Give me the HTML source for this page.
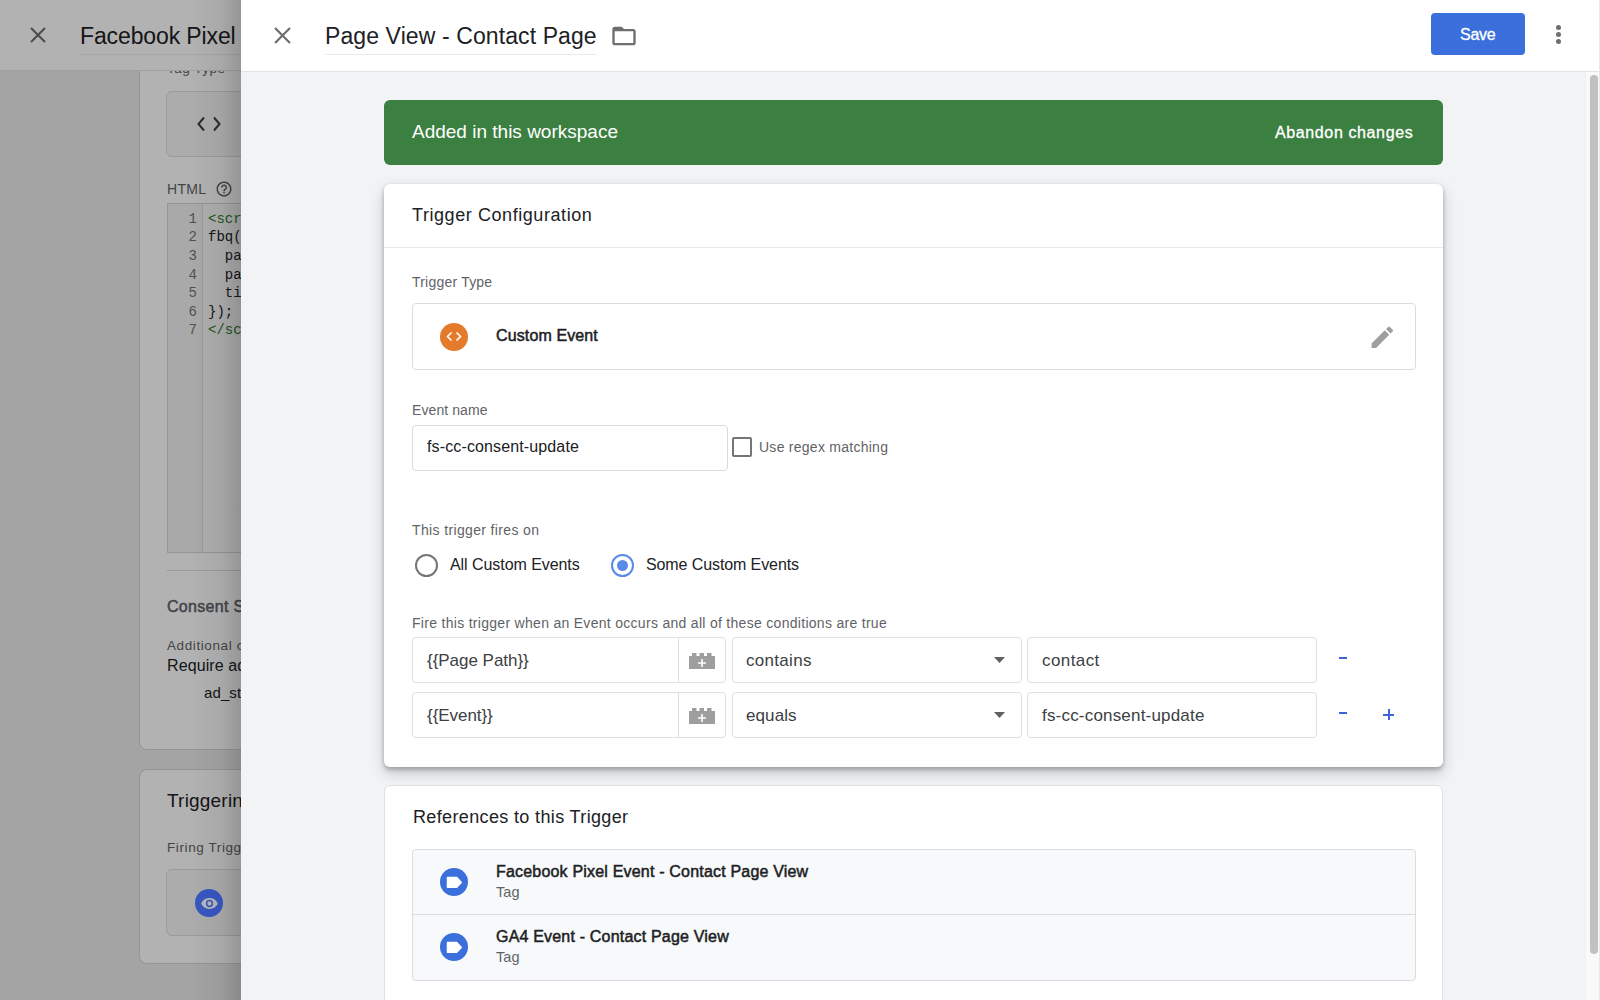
<!DOCTYPE html>
<html><head><meta charset="utf-8"><style>
*{box-sizing:border-box;margin:0;padding:0}
html,body{width:1600px;height:1000px;overflow:hidden;background:#f1f3f4;font-family:"Liberation Sans",sans-serif;color:#202124}
.a{position:absolute}
.t{position:absolute;white-space:nowrap;line-height:1}
svg{position:absolute;overflow:visible}
</style></head><body>
<div class="a" style="left:0;top:0;width:241px;height:1000px;overflow:hidden;background:#ebebeb">
<div class="a" style="left:139px;top:20px;width:220px;height:730px;background:#fff;border-radius:8px;border:1px solid #d6d6d6"></div>
<div class="t" style="left:167px;top:61.5px;font-size:13.5px;color:#5f6368;letter-spacing:0.5px;font-weight:normal;">Tag Type</div>
<div class="a" style="left:166px;top:91px;width:120px;height:66px;border:1px solid #dedede;border-radius:6px;background:#f7f7f7"></div>
<svg style="left:197px;top:116px" width="24" height="16" viewBox="0 0 24 16"><path d="M7 1.5L1.5 8L7 14.5M17 1.5L22.5 8L17 14.5" fill="none" stroke="#3c4043" stroke-width="2"/></svg>
<div class="t" style="left:167px;top:182px;font-size:14px;color:#5f6368;letter-spacing:0.3px;font-weight:normal;">HTML</div>
<svg style="left:214.8px;top:180.1px" width="18.1" height="18.1" viewBox="0 0 24 24"><path d="M11 18h2v-2h-2v2zm1-16C6.48 2 2 6.48 2 12s4.48 10 10 10 10-4.48 10-10S17.52 2 12 2zm0 18c-4.41 0-8-3.59-8-8s3.59-8 8-8 8 3.59 8 8-3.59 8-8 8zm0-14c-2.21 0-4 1.79-4 4h2c0-1.1.9-2 2-2s2 .9 2 2c0 2-3 1.75-3 5h2c0-2.250 3-2.5 3-5 0-2.21-1.79-4-4-4z" fill="#5f6368"/></svg>
<div class="a" style="left:167px;top:203px;width:120px;height:350px;border:1px solid #d6d6d6;background:#fafafa"></div>
<div class="a" style="left:168px;top:204px;width:35px;height:348px;border-right:1px solid #e0e0e0;background:#f3f3f3"></div>
<div class="t" style="left:188.5px;top:211.8px;font-size:14px;color:#757575;letter-spacing:0px;font-weight:normal;font-family:'Liberation Mono',monospace">1</div>
<div class="t" style="left:208px;top:211.8px;font-size:14px;color:#2e7d32;letter-spacing:0px;font-weight:normal;font-family:'Liberation Mono',monospace">&lt;scr</div>
<div class="t" style="left:188.5px;top:230.4px;font-size:14px;color:#757575;letter-spacing:0px;font-weight:normal;font-family:'Liberation Mono',monospace">2</div>
<div class="t" style="left:208px;top:230.4px;font-size:14px;color:#202124;letter-spacing:0px;font-weight:normal;font-family:'Liberation Mono',monospace">fbq(</div>
<div class="t" style="left:188.5px;top:249.0px;font-size:14px;color:#757575;letter-spacing:0px;font-weight:normal;font-family:'Liberation Mono',monospace">3</div>
<div class="t" style="left:208px;top:249.0px;font-size:14px;color:#202124;letter-spacing:0px;font-weight:normal;font-family:'Liberation Mono',monospace">&nbsp;&nbsp;pa</div>
<div class="t" style="left:188.5px;top:267.6px;font-size:14px;color:#757575;letter-spacing:0px;font-weight:normal;font-family:'Liberation Mono',monospace">4</div>
<div class="t" style="left:208px;top:267.6px;font-size:14px;color:#202124;letter-spacing:0px;font-weight:normal;font-family:'Liberation Mono',monospace">&nbsp;&nbsp;pa</div>
<div class="t" style="left:188.5px;top:286.20000000000005px;font-size:14px;color:#757575;letter-spacing:0px;font-weight:normal;font-family:'Liberation Mono',monospace">5</div>
<div class="t" style="left:208px;top:286.20000000000005px;font-size:14px;color:#202124;letter-spacing:0px;font-weight:normal;font-family:'Liberation Mono',monospace">&nbsp;&nbsp;ti</div>
<div class="t" style="left:188.5px;top:304.8px;font-size:14px;color:#757575;letter-spacing:0px;font-weight:normal;font-family:'Liberation Mono',monospace">6</div>
<div class="t" style="left:208px;top:304.8px;font-size:14px;color:#202124;letter-spacing:0px;font-weight:normal;font-family:'Liberation Mono',monospace">});</div>
<div class="t" style="left:188.5px;top:323.40000000000003px;font-size:14px;color:#757575;letter-spacing:0px;font-weight:normal;font-family:'Liberation Mono',monospace">7</div>
<div class="t" style="left:208px;top:323.40000000000003px;font-size:14px;color:#2e7d32;letter-spacing:0px;font-weight:normal;font-family:'Liberation Mono',monospace">&lt;/sc</div>
<div class="a" style="left:167px;top:570px;width:120px;height:1px;background:#dadce0"></div>
<div class="t" style="left:167px;top:599px;font-size:16px;color:#5f6368;letter-spacing:0.3px;font-weight:normal;-webkit-text-stroke:0.5px #5f6368">Consent Settings</div>
<div class="t" style="left:167px;top:638.5px;font-size:13.5px;color:#5f6368;letter-spacing:0.6px;font-weight:normal;">Additional consent</div>
<div class="t" style="left:167px;top:658px;font-size:16px;color:#202124;letter-spacing:0.1px;font-weight:normal;">Require additional</div>
<div class="t" style="left:204px;top:685px;font-size:15px;color:#202124;letter-spacing:0.1px;font-weight:normal;">ad_storage</div>
<div class="a" style="left:139px;top:769px;width:220px;height:195px;background:#fff;border-radius:8px;border:1px solid #d6d6d6"></div>
<div class="t" style="left:167px;top:791px;font-size:19px;color:#202124;letter-spacing:0.2px;font-weight:normal;">Triggering</div>
<div class="t" style="left:167px;top:840.5px;font-size:13.5px;color:#5f6368;letter-spacing:0.6px;font-weight:normal;">Firing Triggers</div>
<div class="a" style="left:166px;top:869px;width:120px;height:67px;border:1px solid #dedede;border-radius:6px;background:#f7f7f7"></div>
<div class="a" style="left:0px;top:0px;width:241px;height:71px;background:#fff;border-bottom:1px solid #e6e6e6"></div>
<svg style="left:30px;top:27px" width="16" height="16" viewBox="0 0 16 16"><path d="M1 1L15 15M15 1L1 15" stroke="#6e6e6e" stroke-width="2.1"/></svg>
<div class="t" style="left:80px;top:25px;font-size:23px;color:#202124;letter-spacing:-0.12px;font-weight:normal;">Facebook Pixel</div>
<div class="a" style="left:80px;top:54px;width:161px;height:1px;background:#ececec"></div>
<div class="a" style="left:0px;top:0px;width:241px;height:1000px;background:rgba(0,0,0,.30)"></div>
<div class="a" style="left:195px;top:889px;width:28px;height:28px;border-radius:50%;background:#3757c2"></div>
<svg style="left:199.5px;top:893.5px" width="19" height="19" viewBox="0 0 24 24"><path d="M12 5.2C7.2 5.2 3.2 8 1.6 12c1.6 4 5.6 6.8 10.4 6.8s8.8-2.8 10.4-6.8C20.8 8 16.8 5.2 12 5.2zm0 11.4a4.6 4.6 0 110-9.2 4.6 4.6 0 010 9.2zm0-7.3a2.7 2.7 0 100 5.4 2.7 2.7 0 000-5.4z" fill="#b9b9b9"/></svg>
<div class="a" style="left:190px;top:0px;width:51px;height:1000px;background:linear-gradient(to right,rgba(0,0,0,0),rgba(0,0,0,.05) 60%,rgba(0,0,0,.16))"></div>
</div>
<div class="a" style="left:241px;top:0px;width:1359px;height:1000px;background:#f1f3f4"></div>
<div class="a" style="left:241px;top:0px;width:1359px;height:72px;background:#fff;border-bottom:1px solid #e3e3e3"></div>
<svg style="left:274px;top:27px" width="17" height="17" viewBox="0 0 16 16"><path d="M1 1L15 15M15 1L1 15" stroke="#6e6e6e" stroke-width="2.1"/></svg>
<div class="t" style="left:325px;top:25px;font-size:23px;color:#202124;letter-spacing:0.1px;font-weight:normal;">Page View - Contact Page</div>
<div class="a" style="left:325px;top:54px;width:271px;height:1px;background:#e8eaed"></div>
<svg style="left:609.5px;top:21.8px" width="28" height="28" viewBox="0 0 24 24"><path d="M20 6h-8l-2-2H4c-1.1 0-1.99.9-1.99 2L2 18c0 1.1.9 2 2 2h16c1.1 0 2-.9 2-2V8c0-1.1-.9-2-2-2zm0 12H4V8h16v10z" fill="#6e6e6e"/></svg>
<div class="a" style="left:1431px;top:13px;width:94px;height:42px;background:#3b6fdc;border-radius:4px"></div>
<div class="t" style="left:1460px;top:27px;font-size:16px;color:#fff;letter-spacing:-0.25px;font-weight:normal;-webkit-text-stroke:0.3px #fff">Save</div>
<div class="a" style="left:1555.5px;top:25px;width:5px;height:5px;border-radius:50%;background:#6e6e6e"></div>
<div class="a" style="left:1555.5px;top:32px;width:5px;height:5px;border-radius:50%;background:#6e6e6e"></div>
<div class="a" style="left:1555.5px;top:39px;width:5px;height:5px;border-radius:50%;background:#6e6e6e"></div>
<div class="a" style="left:1585px;top:72px;width:15px;height:928px;background:#f9f9f9;border-left:1px solid #f1f1f1"></div>
<div class="a" style="left:1589.5px;top:75px;width:8px;height:879px;background:#c1c1c1;border-radius:4px"></div>
<div class="a" style="left:1599px;top:0px;width:1px;height:1000px;background:#e8e8e8"></div>
<div class="a" style="left:384px;top:100px;width:1059px;height:65px;background:#3b7f41;border-radius:6px"></div>
<div class="t" style="left:412px;top:122px;font-size:19px;color:#fff;letter-spacing:0px;font-weight:normal;">Added in this workspace</div>
<div class="t" style="left:1275px;top:125px;font-size:16px;color:#fff;letter-spacing:0.62px;font-weight:normal;-webkit-text-stroke:0.3px #fff">Abandon changes</div>
<div class="a" style="left:384px;top:184px;width:1059px;height:582.5px;background:#fff;border-radius:6px;box-shadow:0 3px 4px rgba(0,0,0,.22),0 6px 14px 1px rgba(0,0,0,.16),0 0 3px rgba(0,0,0,.06)"></div>
<div class="t" style="left:412px;top:206px;font-size:18px;color:#202124;letter-spacing:0.57px;font-weight:normal;">Trigger Configuration</div>
<div class="a" style="left:384px;top:247px;width:1059px;height:1px;background:#e8eaed"></div>
<div class="t" style="left:412px;top:274.5px;font-size:14px;color:#5f6368;letter-spacing:0.21px;font-weight:normal;">Trigger Type</div>
<div class="a" style="left:412px;top:303px;width:1004px;height:67px;border:1px solid #dadce0;border-radius:4px;background:#fff"></div>
<div class="a" style="left:440px;top:323px;width:28px;height:28px;border-radius:50%;background:#e37b2b"></div>
<svg style="left:446px;top:332px" width="16" height="9" viewBox="0 0 16 9"><path d="M5.5 0.5L1.5 4.5L5.5 8.5M10.5 0.5L14.5 4.5L10.5 8.5" fill="none" stroke="#fff" stroke-width="1.6"/></svg>
<div class="t" style="left:496px;top:328px;font-size:16px;color:#202124;letter-spacing:0.12px;font-weight:normal;-webkit-text-stroke:0.5px #202124">Custom Event</div>
<svg style="left:1368px;top:322.5px" width="28.6" height="28.6" viewBox="0 0 24 24"><path d="M3 17.25V21h3.75L17.81 9.94l-3.75-3.75L3 17.25zM20.71 7.04a1 1 0 000-1.41l-2.34-2.34a1 1 0 00-1.41 0l-1.83 1.83 3.75 3.75 1.83-1.83z" fill="#9e9e9e"/></svg>
<div class="t" style="left:412px;top:403px;font-size:14px;color:#5f6368;letter-spacing:0.09px;font-weight:normal;">Event name</div>
<div class="a" style="left:412px;top:425px;width:316px;height:46px;border:1px solid #dadce0;border-radius:4px;background:#fff"></div>
<div class="t" style="left:427px;top:439px;font-size:16px;color:#202124;letter-spacing:0.13px;font-weight:normal;">fs-cc-consent-update</div>
<div class="a" style="left:732px;top:437px;width:20px;height:20px;border:2px solid #757575;border-radius:2px"></div>
<div class="t" style="left:759px;top:440px;font-size:14px;color:#5f6368;letter-spacing:0.26px;font-weight:normal;">Use regex matching</div>
<div class="t" style="left:412px;top:522.5px;font-size:14px;color:#5f6368;letter-spacing:0.36px;font-weight:normal;">This trigger fires on</div>
<div class="a" style="left:414.5px;top:553.5px;width:23px;height:23px;border:2px solid #757575;border-radius:50%"></div>
<div class="t" style="left:450px;top:557px;font-size:16px;color:#202124;letter-spacing:-0.06px;font-weight:normal;">All Custom Events</div>
<div class="a" style="left:610.5px;top:553.5px;width:23px;height:23px;border:2px solid #5a8ae8;border-radius:50%"></div>
<div class="a" style="left:616.5px;top:559.5px;width:11px;height:11px;background:#5a8ae8;border-radius:50%"></div>
<div class="t" style="left:646px;top:557px;font-size:16px;color:#202124;letter-spacing:-0.1px;font-weight:normal;">Some Custom Events</div>
<div class="t" style="left:412px;top:616px;font-size:14px;color:#5f6368;letter-spacing:0.295px;font-weight:normal;">Fire this trigger when an Event occurs and all of these conditions are true</div>
<div class="a" style="left:412px;top:637px;width:314px;height:46px;border:1px solid #dfdfdf;border-radius:4px;background:#fff"></div>
<div class="a" style="left:678px;top:637px;width:1px;height:46px;background:#e0e0e0"></div>
<div class="t" style="left:427px;top:651.5px;font-size:17px;color:#3c4043;letter-spacing:-0.03px;font-weight:normal;">{{Page Path}}</div>
<svg style="left:689px;top:653px" width="26" height="16" viewBox="0 0 26 16"><path d="M0 3h3V0h4.5v3h3V0h4.5v3h3V0h4.5v3H26v13H0z" fill="#9e9e9e"/><path d="M13 6v8M9 10h8" stroke="#fff" stroke-width="1.6"/></svg>
<div class="a" style="left:731.5px;top:637px;width:290px;height:46px;border:1px solid #dfdfdf;border-radius:4px;background:#fff"></div>
<div class="t" style="left:746px;top:651.5px;font-size:17px;color:#3c4043;letter-spacing:0.3px;font-weight:normal;">contains</div>
<svg style="left:994px;top:657px" width="11" height="6" viewBox="0 0 11 6"><path d="M0 0h11L5.5 6z" fill="#616161"/></svg>
<div class="a" style="left:1026.5px;top:637px;width:290px;height:46px;border:1px solid #dfdfdf;border-radius:4px;background:#fff"></div>
<div class="t" style="left:1042px;top:651.5px;font-size:17px;color:#3c4043;letter-spacing:0.42px;font-weight:normal;">contact</div>
<div class="a" style="left:1339px;top:657px;width:8px;height:2.2px;background:#3e64d8"></div>
<div class="a" style="left:412px;top:692px;width:314px;height:46px;border:1px solid #dfdfdf;border-radius:4px;background:#fff"></div>
<div class="a" style="left:678px;top:692px;width:1px;height:46px;background:#e0e0e0"></div>
<div class="t" style="left:427px;top:706.5px;font-size:17px;color:#3c4043;letter-spacing:-0.05px;font-weight:normal;">{{Event}}</div>
<svg style="left:689px;top:708px" width="26" height="16" viewBox="0 0 26 16"><path d="M0 3h3V0h4.5v3h3V0h4.5v3h3V0h4.5v3H26v13H0z" fill="#9e9e9e"/><path d="M13 6v8M9 10h8" stroke="#fff" stroke-width="1.6"/></svg>
<div class="a" style="left:731.5px;top:692px;width:290px;height:46px;border:1px solid #dfdfdf;border-radius:4px;background:#fff"></div>
<div class="t" style="left:746px;top:706.5px;font-size:17px;color:#3c4043;letter-spacing:0.1px;font-weight:normal;">equals</div>
<svg style="left:994px;top:712px" width="11" height="6" viewBox="0 0 11 6"><path d="M0 0h11L5.5 6z" fill="#616161"/></svg>
<div class="a" style="left:1026.5px;top:692px;width:290px;height:46px;border:1px solid #dfdfdf;border-radius:4px;background:#fff"></div>
<div class="t" style="left:1042px;top:706.5px;font-size:17px;color:#3c4043;letter-spacing:0.19px;font-weight:normal;">fs-cc-consent-update</div>
<div class="a" style="left:1339px;top:712px;width:8px;height:2.2px;background:#3e64d8"></div>
<div class="a" style="left:1383px;top:713.5px;width:11px;height:2px;background:#3e64d8"></div>
<div class="a" style="left:1387.5px;top:709px;width:2px;height:11px;background:#3e64d8"></div>
<div class="a" style="left:384px;top:784.5px;width:1059px;height:260px;background:#fff;border-radius:6px;border:1px solid #e0e0e0"></div>
<div class="t" style="left:413px;top:807.5px;font-size:18px;color:#202124;letter-spacing:0.36px;font-weight:normal;">References to this Trigger</div>
<div class="a" style="left:412px;top:849px;width:1004px;height:132px;background:#f8f9fa;border:1px solid #dadce0;border-radius:4px"></div>
<div class="a" style="left:412px;top:914px;width:1004px;height:1px;background:#dadce0"></div>
<div class="a" style="left:440px;top:868px;width:28px;height:28px;border-radius:50%;background:#3b6fdc"></div>
<svg style="left:446px;top:876px" width="16" height="12" viewBox="0 0 16 12"><path d="M1.5 1.5h9.2l4.6 4.9-4.6 4.9h-9.2z" fill="#fff" stroke="#fff" stroke-width="1.5" stroke-linejoin="round"/></svg>
<div class="t" style="left:496px;top:864px;font-size:16px;color:#202124;letter-spacing:0.19px;font-weight:normal;-webkit-text-stroke:0.5px #202124">Facebook Pixel Event - Contact Page View</div>
<div class="t" style="left:496px;top:885px;font-size:14.5px;color:#5f6368;letter-spacing:0.1px;font-weight:normal;">Tag</div>
<div class="a" style="left:440px;top:933px;width:28px;height:28px;border-radius:50%;background:#3b6fdc"></div>
<svg style="left:446px;top:941px" width="16" height="12" viewBox="0 0 16 12"><path d="M1.5 1.5h9.2l4.6 4.9-4.6 4.9h-9.2z" fill="#fff" stroke="#fff" stroke-width="1.5" stroke-linejoin="round"/></svg>
<div class="t" style="left:496px;top:929px;font-size:16px;color:#202124;letter-spacing:0.19px;font-weight:normal;-webkit-text-stroke:0.5px #202124">GA4 Event - Contact Page View</div>
<div class="t" style="left:496px;top:950px;font-size:14.5px;color:#5f6368;letter-spacing:0.1px;font-weight:normal;">Tag</div>
</body></html>
